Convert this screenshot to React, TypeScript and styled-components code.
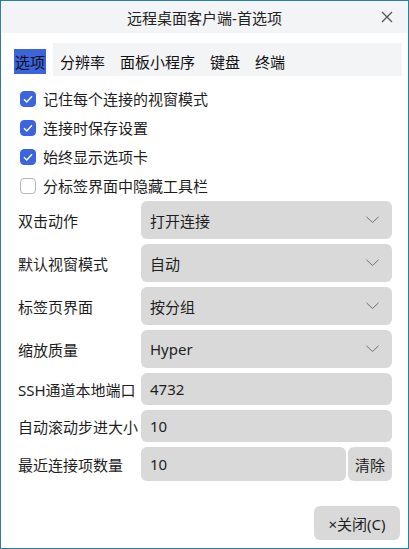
import { Fragment } from 'react';
import styled, { createGlobalStyle } from 'styled-components';

const GlobalStyle = createGlobalStyle`
  html, body {
    margin: 0;
    padding: 0;
    background: #ffffff;
  }
  body {
    font-family: "Noto Sans", "Noto Sans CJK SC", sans-serif;
    color: #1e1e1e;
  }
`;

const Window = styled.div`
  box-sizing: border-box;
  width: 409px;
  height: 549px;
  border: 1px solid #2b7ea1;
  background: #ffffff;
  display: flex;
  flex-direction: column;
`;

const TitleBar = styled.div`
  height: 32px;
  background: #f3f4f6;
  position: relative;
  display: flex;
  align-items: center;
  justify-content: center;
  font-size: 15px;
  color: #222;
`;

const CloseIcon = styled.button`
  position: absolute;
  right: 14px;
  top: 9px;
  width: 14px;
  height: 14px;
  padding: 0;
  border: none;
  background: none;
  display: flex;
  align-items: center;
  justify-content: center;
`;

const TabBar = styled.div`
  margin: 10px 6px 0 6px;
  height: 33px;
  background: #f3f4f6;
  display: flex;
  align-items: center;
`;

const Tab = styled.div<{ $active?: boolean }>`
  height: 100%;
  display: flex;
  align-items: center;
  padding: 0 7px;
  background: ${(p) => (p.$active ? '#ffffff' : 'transparent')};
  font-size: 15px;
  color: #111;
  margin-right: ${(p) => (p.$active ? '0' : '1px')};
`;

const TabLabel = styled.span<{ $selected?: boolean }>`
  display: inline-flex;
  align-items: center;
  height: 25px;
  margin-top: 3px;
  background: ${(p) => (p.$selected ? '#3c64dd' : 'transparent')};
  padding: 0 ${(p) => (p.$selected ? '1px' : '0')};
`;

const CheckList = styled.div`
  margin-top: 8px;
  padding-left: 19px;
  display: flex;
  flex-direction: column;
`;

const CheckRow = styled.label`
  height: 29px;
  display: flex;
  align-items: center;
  gap: 7px;
  font-size: 15px;
`;

const Box = styled.span<{ $checked?: boolean }>`
  box-sizing: border-box;
  width: 16px;
  height: 16px;
  border-radius: 4px;
  background: ${(p) => (p.$checked ? '#3c64dd' : '#ffffff')};
  border: 1px solid ${(p) => (p.$checked ? '#3c64dd' : '#b8b8b8')};
  display: flex;
  align-items: center;
  justify-content: center;
`;

const Form = styled.div`
  margin-top: 1px;
  padding: 0 16px 0 17px;
  display: grid;
  grid-template-columns: 123px 1fr;
  row-gap: 5px;
`;

const Label = styled.div`
  display: flex;
  align-items: center;
  font-size: 15px;
  white-space: nowrap;
`;

const Field = styled.div<{ $h: number }>`
  box-sizing: border-box;
  height: ${(p) => p.$h}px;
  background: #d9d9d9;
  border-radius: 6px;
  display: flex;
  align-items: center;
  padding: 0 13px 0 9px;
  font-size: 15px;
  flex: 1;
`;

const FieldText = styled.span`
  flex: 1;
`;

const FieldGroup = styled.div`
  display: flex;
  gap: 2px;
`;

const SmallButton = styled.button`
  width: 44px;
  border: none;
  border-radius: 6px;
  background: #d9d9d9;
  font-family: inherit;
  font-size: 15px;
  color: #1e1e1e;
  padding: 0;
`;

const Footer = styled.div`
  margin-top: auto;
  padding: 0 8px 8px 0;
  display: flex;
  justify-content: flex-end;
`;

const CloseButton = styled.button`
  width: 86px;
  height: 34px;
  border: none;
  border-radius: 6px;
  background: #d9d9d9;
  font-family: inherit;
  font-size: 15px;
  color: #1e1e1e;
  padding: 0;
`;

const Chevron = () => (
  <svg width="13" height="8" viewBox="0 0 13 8">
    <path d="M0.5 0.8 L6.5 6.5 L12.5 0.8" fill="none" stroke="#707070" strokeWidth="1" />
  </svg>
);

const Tick = () => (
  <svg width="10" height="8" viewBox="0 0 10 8">
    <path d="M1 4.2 L3.8 7 L9 1.2" fill="none" stroke="#ffffff" strokeWidth="1.4" />
  </svg>
);

const checks = [
  { text: '记住每个连接的视窗模式', on: true },
  { text: '连接时保存设置', on: true },
  { text: '始终显示选项卡', on: true },
  { text: '分标签界面中隐藏工具栏', on: false },
];

const selects = [
  { label: '双击动作', value: '打开连接' },
  { label: '默认视窗模式', value: '自动' },
  { label: '标签页界面', value: '按分组' },
  { label: '缩放质量', value: 'Hyper' },
];

const App = () => {
  return (
    <>
      <GlobalStyle />
      <Window>
        <TitleBar>
          远程桌面客户端-首选项
          <CloseIcon>
            <svg width="12" height="12" viewBox="0 0 12 12">
              <path d="M1 1 L11 11 M11 1 L1 11" stroke="#555" strokeWidth="1.3" />
            </svg>
          </CloseIcon>
        </TitleBar>

        <TabBar>
          <Tab $active>
            <TabLabel $selected>选项</TabLabel>
          </Tab>
          <Tab><TabLabel>分辨率</TabLabel></Tab>
          <Tab><TabLabel>面板小程序</TabLabel></Tab>
          <Tab><TabLabel>键盘</TabLabel></Tab>
          <Tab><TabLabel>终端</TabLabel></Tab>
        </TabBar>

        <CheckList>
          {checks.map((c) => (
            <CheckRow key={c.text}>
              <Box $checked={c.on}>{c.on && <Tick />}</Box>
              {c.text}
            </CheckRow>
          ))}
        </CheckList>

        <Form>
          {selects.map((s) => (
            <Fragment key={s.label}>
              <Label>{s.label}</Label>
              <Field $h={38}>
                <FieldText>{s.value}</FieldText>
                <Chevron />
              </Field>
            </Fragment>
          ))}
          <Label>SSH通道本地端口</Label>
          <Field $h={32}>4732</Field>
          <Label>自动滚动步进大小</Label>
          <Field $h={32}>10</Field>
          <Label>最近连接项数量</Label>
          <FieldGroup>
            <Field $h={34}>10</Field>
            <SmallButton>清除</SmallButton>
          </FieldGroup>
        </Form>

        <Footer>
          <CloseButton>×关闭(C)</CloseButton>
        </Footer>
      </Window>
    </>
  );
};

export default App;
